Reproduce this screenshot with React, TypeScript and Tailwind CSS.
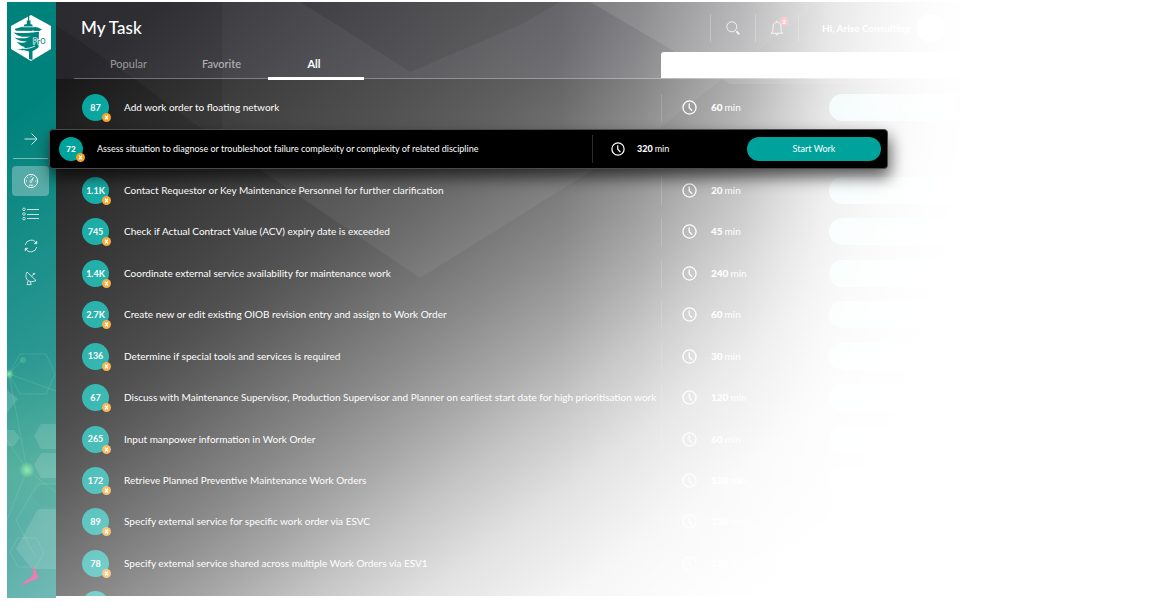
import React from "react";

type Task = { count: string; title: string; minutes: number; active?: boolean };

const tasks: Task[] = [
  { count: "87", title: "Add work order to floating network", minutes: 60 },
  {
    count: "72",
    title: "Assess situation to diagnose or troubleshoot failure complexity or complexity of related discipline",
    minutes: 320,
    active: true,
  },
  { count: "1.1K", title: "Contact Requestor or Key Maintenance Personnel for further clarification", minutes: 20 },
  { count: "745", title: "Check if Actual Contract Value (ACV) expiry date is exceeded", minutes: 45 },
  { count: "1.4K", title: "Coordinate external service availability for maintenance work", minutes: 240 },
  { count: "2.7K", title: "Create new or edit existing OIOB revision entry and assign to Work Order", minutes: 60 },
  { count: "136", title: "Determine if special tools and services is required", minutes: 30 },
  {
    count: "67",
    title:
      "Discuss with Maintenance Supervisor, Production Supervisor and Planner on earliest start date for high prioritisation work",
    minutes: 120,
  },
  { count: "265", title: "Input manpower information in Work Order", minutes: 60 },
  { count: "172", title: "Retrieve Planned Preventive Maintenance Work Orders", minutes: 120 },
  { count: "89", title: "Specify external service for specific work order via ESVC", minutes: 120 },
  { count: "78", title: "Specify external service shared across multiple Work Orders via ESV1", minutes: 120 },
];

function Logo() {
  return (
    <svg viewBox="0 0 40 46" className="h-[46px] w-10" role="img" aria-label="PrO">
      <path d="M20 0 40 11v23L20 46 0 34V11Z" fill="#fff" />
      <g fill="#00837d">
        <path d="M17 1h1.200v4.500h1.300v3.500l2 .8v1.700l5.500 1 4 2-3 1.500-23-.3L3.500 14l5-1.500 4.500-1v-1.700l2.800-.8V5.500H17Z" />
        <path d="M3 17.500c5 1 14 .6 25-.8l-.5 15.800-3 2-3 1.800V45l-3.500-1v-7.500c-3-1-6-1.500-12.500-1.500 4-.5 7-1 8.500-3-3-.5-5.500-2-8-5 4 1 7 1 10-.5-5 0-9-.8-12.500-4 6 1.500 12 1 16-1-6 .8-13 .5-16.500-4Z" />
      </g>
      <g fill="none" stroke="#fff" strokeWidth="0.8">
        <path d="M12 33.500c4 .3 8-.5 12-2.500M22 15v2.500M12 11.800h12" />
      </g>
      <text
        x="22"
        y="29"
        fontSize="7"
        fontWeight="500"
        fontFamily="Inter, sans-serif"
        fill="#00837d"
        stroke="#fff"
        strokeWidth="1.200"
        paintOrder="stroke"
      >
        PrO
      </text>
    </svg>
  );
}

function ClockIcon({ className }: { className: string }) {
  return (
    <svg viewBox="0 0 16 16" className={className} fill="none" stroke="currentColor" aria-hidden="true">
      <circle cx="8" cy="8" r="7" strokeWidth="1.4" />
      <path d="M7.700 3.600v4.600l3 3.400" strokeWidth="1.400" />
    </svg>
  );
}

function CountBadge({ count, active }: { count: string; active?: boolean }) {
  return (
    <span
      className={
        active
          ? "relative flex size-6 shrink-0 items-center justify-center rounded-full bg-[#00a39c] text-[8px] font-black"
          : "relative flex size-[27px] shrink-0 items-center justify-center rounded-full bg-[#00a39c] text-[9px] font-bold"
      }
    >
      {count}
      <svg viewBox="0 0 9 9" className="absolute -right-0.5 -bottom-px size-[9px]" aria-hidden="true">
        <circle cx="4.500" cy="4.500" r="4.500" fill="#f5a020" />
        <path d="M3.100 2.600 5.900 6.400M5.900 2.600 3.100 6.400" stroke="#fff" strokeWidth="1.200" />
      </svg>
    </span>
  );
}

function TaskRow({ task }: { task: Task }) {
  if (task.active) {
    return (
      <li className="relative z-20 -ml-[7px] mr-[279px] flex min-h-9 flex-1">
        <div className="my-px flex min-w-0 flex-1 items-center rounded border border-[#4a4a4a] bg-black pl-[9px] pr-[6px] shadow-[2px_8px_16px_rgba(0,0,0,0.65)]">
          <CountBadge count={task.count} active />
          <span className="ml-[14px] min-w-0 flex-1 truncate text-[9px]">{task.title}</span>
          <span className="flex h-7 w-[155px] shrink-0 items-center border-l border-[#2c2c2c] pl-[18px] text-[9px]">
            <ClockIcon className="mr-3 size-[14px]" />
            <strong className="mr-0.5 font-black">{task.minutes}</strong>min
          </span>
          <button type="button" className="h-6 w-[134px] shrink-0 rounded-full bg-[#00a39c] text-[9px]">
            Start Work
          </button>
        </div>
      </li>
    );
  }
  return (
    <li className="flex min-h-9 flex-1 items-center pl-[26px] pr-[192px]">
      <CountBadge count={task.count} />
      <span className="ml-[15px] min-w-0 flex-1 truncate text-[10px]">{task.title}</span>
      <span className="flex h-7 w-[168px] shrink-0 items-center border-l border-white/15 pl-5 text-[10px]">
        <ClockIcon className="mr-[14px] size-[15px]" />
        <strong className="mr-0.5 font-black">{task.minutes}</strong>min
      </span>
      <button type="button" className="h-[27px] w-[146px] shrink-0 rounded-full bg-[#8fe0dc] text-[10px]">
        Start Work
      </button>
    </li>
  );
}

function Facets() {
  return (
    <svg
      className="absolute inset-0 size-full"
      viewBox="56 2 1111 594"
      preserveAspectRatio="xMinYMin slice"
      aria-hidden="true"
    >
      <g fill="#fff">
        <path d="M56 25 133 78 222 144V2H56Z" fillOpacity="0.03" />
        <path d="M222 2v142l198 134 240-150 160-126Z" fillOpacity="0.06" />
        <path d="M590 2 730 84H1000V2Z" fillOpacity="0.1" />
      </g>
      <path d="M300 2 345 30 410 72 520 25 560 2Z" fillOpacity="0.14" />
    </svg>
  );
}

function SidebarPattern() {
  return (
    <svg
      className="absolute inset-x-0 bottom-0 h-[250px] w-full"
      viewBox="7 348 49 250"
      preserveAspectRatio="xMidYMax slice"
      aria-hidden="true"
    >
      <defs>
        <linearGradient id="side" x1="0" y1="0" x2="0" y2="1">
          <stop offset="0" stopColor="#25a07f" stopOpacity="0" />
          <stop offset="0.5" stopColor="#2da283" stopOpacity="0.7" />
          <stop offset="1" stopColor="#169080" stopOpacity="0" />
        </linearGradient>
        <radialGradient id="glow">
          <stop offset="0" stopColor="#6be58e" />
          <stop offset="1" stopColor="#6be58e" stopOpacity="0" />
        </radialGradient>
      </defs>
      <path d="M7 348h49v250H7Z" fill="url(#side)" />
      <g fill="#fff" fillOpacity="0.13">
        <path d="M41 424h15v25H41l-7-13Z" />
        <path d="M41 453h15v25H41l-7-13Z" />
        <path d="M38 509h18v60H32l-16-20Z" />
        <path d="M7 390 18 399 7 413Z" />
        <path d="M7 430h7l6 8-6 8H7Z" />
      </g>
      <path d="M41 484h15v22H41l-7-11Z" fill="#00796f" fillOpacity="0.15" />
      <g fill="none" stroke="#b8f0d8" strokeOpacity="0.2" strokeWidth="0.7">
        <path d="M20 354h26l9 20-9 20H20L9 374Z" />
        <path d="M56 484H38L16 520l20 38M18 538h18l8 14-8 15H18l-8-15Z" />
        <path d="M9 374 22 360M9 374l47 17M9 374 27 470 56 492M27 470 7 440M27 470 7 520" />
      </g>
      <circle cx="9" cy="374" r="5" fill="url(#glow)" />
      <circle cx="27" cy="470" r="8" fill="url(#glow)" />
      <circle cx="23" cy="360" r="3" fill="#6be58e" fillOpacity="0.25" />
    </svg>
  );
}

const navLink = "flex h-8 w-full items-center justify-center text-white/75";

function Sidebar() {
  return (
    <aside className="relative -mb-0.5 flex w-[49px] shrink-0 flex-col items-center bg-[#00827c] pt-[13px] pr-0.5">
      <SidebarPattern />
      <a href="#home" className="relative" aria-label="Home">
        <Logo />
      </a>
      <button type="button" aria-label="Expand menu" className="relative mt-[66px] flex h-6 items-center text-white/80">
        <svg viewBox="0 0 14 14" className="size-[14px]" fill="none" stroke="currentColor" aria-hidden="true">
          <path d="M0.500 7h12.500M7.500 1.500 13 7l-5.500 5.500" />
        </svg>
      </button>
      <hr className="relative mt-[7px] w-[35px] border-white/45" />
      <nav aria-label="Main" className="relative mt-[7px] flex w-full flex-col items-center px-[5px]">
        <a
          href="#dashboard"
          aria-label="Dashboard"
          className="mb-0.5 flex h-[30px] w-full items-center justify-center rounded-sm bg-white/30 text-white"
        >
          <svg viewBox="0 0 16 16" className="size-4" fill="none" stroke="currentColor" aria-hidden="true">
            <circle cx="8" cy="8" r="6.600" strokeWidth="1" />
            <path d="M8 2.800v1.200M2.800 8H4M12 8h1.200M4.400 4.400l.8.800M5.800 12.200h4.400" strokeWidth="0.900" />
            <path d="M10.400 4.600 8.700 8.600a.9.900 0 1 1-1.300-.6Z" strokeWidth="0.800" />
          </svg>
        </a>
        <a href="#tasks" aria-label="Tasks" className={navLink}>
          <svg viewBox="0 0 17 14" className="h-[14px] w-[17px]" fill="none" stroke="currentColor" aria-hidden="true">
            <path d="M5 2.500h12M5 7.500h12M5 11.500h12" />
            <circle cx="2" cy="2.300" r="1.300" strokeWidth="0.900" />
            <circle cx="2" cy="7" r="1.300" strokeWidth="0.900" />
            <circle cx="2" cy="11.700" r="1.300" strokeWidth="0.900" />
          </svg>
        </a>
        <a href="#sync" aria-label="Sync" className={navLink}>
          <svg viewBox="0 0 14 14" className="size-[14px]" fill="none" stroke="currentColor" aria-hidden="true">
            <path d="M1.200 6A6 6 0 0 1 12.400 4.400M12.800 8A6 6 0 0 1 1.600 9.600" />
            <path d="M12.900 2v2.800h-2.800ZM1.100 12V9.200h2.800Z" fill="currentColor" strokeWidth="0.600" />
          </svg>
        </a>
        <a href="#signal" aria-label="Signal" className={navLink}>
          <svg viewBox="0 0 14 16" className="h-4 w-[14px]" fill="none" stroke="currentColor" aria-hidden="true">
            <path d="M3 2C1.200 5.600 1.800 8.800 4 10.500c2.200 1.600 5.200 1.500 8 0Z" />
            <path d="M7.400 6.400 10.200 3.600M4.200 10.800 3 14.600h4.200L6.400 11.500" strokeWidth="1" />
            <circle cx="10" cy="3.800" r="0.800" fill="currentColor" strokeWidth="0.400" />
          </svg>
        </a>
      </nav>
      <svg viewBox="0 0 18 20" className="relative mt-auto mb-3 h-5 w-[18px]" aria-hidden="true">
        <path
          d="M9 0.500c3 1 5.500 3 5.500 6.500l.8 2.500 2.500 1-2.500 1.200-1.300 1.800-3.500.8c-2 .5-3 1.200-4.500 2.200-1.500 1-3.500 1.500-5.700 3.500 1-3 3-5.500 5.500-6.500l2.700-1.500 2.500-3.500c.8-3 0-5.500-2-8Z"
          fill="#e0287d"
        />
      </svg>
    </aside>
  );
}

const tab = "h-7 border-b-[3px]";

function Header() {
  return (
    <header className="relative flex flex-col bg-[linear-gradient(90deg,#25252a,#36363b_50%,#3c3c42)]">
      <div className="flex h-[52px] items-center pl-[25px] pr-[222px]">
        <h1 className="flex-1 text-[17px] leading-5 font-medium">My Task</h1>
        <div className="flex h-7 items-center border-l border-white/25 px-[15px]">
          <button type="button" aria-label="Search" className="text-white/80">
            <svg viewBox="0 0 14 14" className="size-[14px]" fill="none" stroke="currentColor" aria-hidden="true">
              <circle cx="5.800" cy="5.800" r="5" />
              <path d="m9.500 9.500 1 1" />
              <path d="m10.400 10.400 2.800 2.800" strokeWidth="2" />
            </svg>
          </button>
        </div>
        <div className="flex h-7 items-center border-x border-white/25 px-[14px]">
          <button type="button" aria-label="2 notifications" className="relative text-white/80">
            <svg viewBox="0 0 14 16" className="h-4 w-[14px]" fill="none" stroke="currentColor" aria-hidden="true">
              <path d="M1 13.200h12c-1.500-1-2-2.200-2-4V6.500a4 4.500 0 0 0-8 0v2.700c0 1.800-.5 3-2 4ZM5.700 13.500a1.300 1.300 0 0 0 2.600 0M7 2V.8" />
            </svg>
            <span className="absolute -top-[3px] -right-1 flex size-2 items-center justify-center rounded-full bg-[#ff1522] text-[6px] font-black text-white">
              2
            </span>
          </button>
        </div>
        <span className="ml-[23px] w-[95px] text-[10px] font-bold whitespace-nowrap">Hi, Arise Consulting</span>
        <span className="size-7 rounded-full bg-white" />
      </div>
      <div className="ml-[18px] flex h-[25px] items-end border-b border-white/30">
        <div role="tablist" aria-label="Task filter" className="-mb-0.5 ml-2 flex flex-1 text-[11px]">
          <button type="button" role="tab" aria-selected="false" className={`${tab} w-[93px] border-transparent text-white/50`}>
            Popular
          </button>
          <button type="button" role="tab" aria-selected="false" className={`${tab} w-[93px] border-transparent font-medium text-white/60`}>
            Favorite
          </button>
          <button type="button" role="tab" aria-selected="true" className={`${tab} w-24 border-white pr-1 font-bold`}>
            All
          </button>
        </div>
        <input
          type="search"
          aria-label="Search tasks"
          className="h-[26px] w-[506px] rounded-tl-[3px] bg-white px-3 text-[11px] text-gray-700 outline-none"
        />
      </div>
    </header>
  );
}

export default function App() {
  return (
    <div className="relative flex min-h-screen overflow-hidden bg-white pt-0.5 pr-[7px] pb-3 pl-[7px] font-['Lato','Liberation_Sans',sans-serif] text-white">
      <Sidebar />
      <main className="relative flex min-w-0 flex-1 flex-col bg-[linear-gradient(90deg,#181818,#1f1f1f_35%,#202020_60%)]">
        <Header />
        <Facets />
        <ul className="relative flex flex-1 flex-col pt-2">
          {tasks.map((task) => (
            <TaskRow key={task.title} task={task} />
          ))}
          <li className="flex h-3 items-start overflow-hidden pl-[26px] pt-[7px]" aria-hidden="true">
            <span className="size-[27px] shrink-0 rounded-full bg-[#00a39c]" />
          </li>
        </ul>
      </main>
      <div className="pointer-events-none absolute inset-0 z-10 bg-[linear-gradient(90deg,transparent_560px,rgba(255,255,255,0.1)_640px,rgba(255,255,255,0.36)_742px,rgba(255,255,255,0.76)_830px,rgba(255,255,255,0.88)_880px,rgba(255,255,255,0.97)_930px,#fff_970px),linear-gradient(143deg,transparent_100px,rgba(255,255,255,0.1)_220px,rgba(255,255,255,0.18)_320px,rgba(255,255,255,0.24)_380px,rgba(255,255,255,0.3)_424px,rgba(255,255,255,0.48)_530px,rgba(255,255,255,0.61)_600px,rgba(255,255,255,0.74)_660px,rgba(255,255,255,0.87)_732px,rgba(255,255,255,0.96)_820px,#fff_930px)]" />
    </div>
  );
}
